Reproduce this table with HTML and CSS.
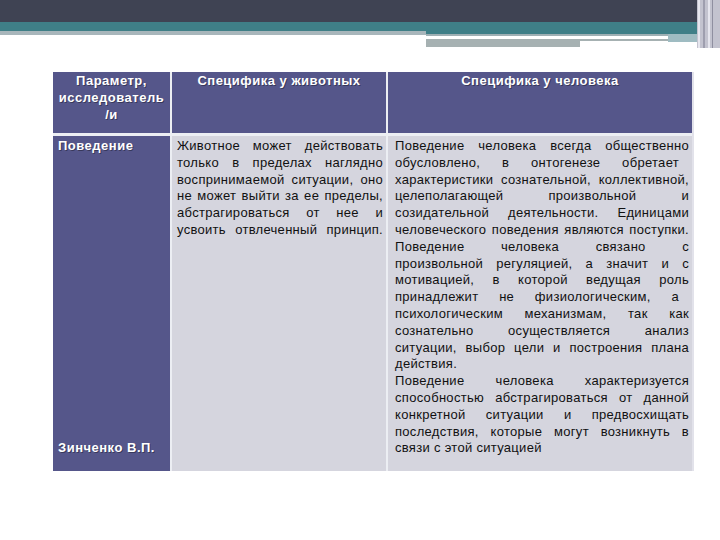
FILE: index.html
```html
<!DOCTYPE html>
<html lang="ru">
<head>
<meta charset="utf-8">
<link rel="stylesheet" href="styles.css">
</head>
<body>
<svg class="deco" width="720" height="50" viewBox="0 0 720 50">
  <rect x="0" y="0" width="720" height="23" fill="#3f4353"/>
  <rect x="0" y="22" width="697" height="10" fill="#3f7f87"/>
  <rect x="426" y="31" width="271" height="3" fill="#3f7f87"/>
  <rect x="0" y="31" width="426" height="4" fill="#a8b6bb"/>
  <rect x="426" y="34" width="242" height="2" fill="#9fb0b4"/>
  <rect x="426" y="36" width="242" height="3" fill="#ffffff"/>
  <rect x="426" y="39" width="242" height="2" fill="#a6b1b2"/>
  <rect x="426" y="41" width="154" height="6" fill="#a6b1b2"/>
  <rect x="668" y="34" width="29" height="8" fill="#9fbcc2"/>
  <rect x="697" y="0" width="23" height="48" fill="#c3c3cf"/>
  <rect x="698" y="0" width="2" height="48" fill="#e6e6ee"/>
  <rect x="703" y="0" width="2" height="48" fill="#9e9eae"/>
  <rect x="708" y="0" width="2" height="48" fill="#e6e6ee"/>
  <rect x="712" y="0" width="1" height="48" fill="#8f8fa0"/>
</svg>
<div class="grid">
  <div class="hcell">Параметр,<br>исследователь<br>/и</div>
  <div class="hcell">Специфика у животных</div>
  <div class="hcell">Специфика у человека</div>
  <div class="pcell">
    <span>Поведение</span>
    <span>Зинченко В.П.</span>
  </div>
  <div class="cell c2">
    <span class="ln">Животное может действовать</span>
    <span class="ln">только в пределах наглядно</span>
    <span class="ln">воспринимаемой ситуации, оно</span>
    <span class="ln">не может выйти за ее пределы,</span>
    <span class="ln">абстрагироваться от нее и</span>
    <span class="ln">усвоить отвлеченный принцип.</span>
  </div>
  <div class="cell c3">
    <span class="ln">Поведение человека всегда общественно</span>
    <span class="ln short">обусловлено, в онтогенезе обретает</span>
    <span class="ln">характеристики сознательной, коллективной,</span>
    <span class="ln">целеполагающей произвольной и</span>
    <span class="ln">созидательной деятельности. Единицами</span>
    <span class="ln">человеческого поведения являются поступки.</span>
    <span class="ln">Поведение человека связано с</span>
    <span class="ln">произвольной регуляцией, а значит и с</span>
    <span class="ln">мотивацией, в которой ведущая роль</span>
    <span class="ln short">принадлежит не физиологическим, а</span>
    <span class="ln">психологическим механизмам, так как</span>
    <span class="ln">сознательно осуществляется анализ</span>
    <span class="ln">ситуации, выбор цели и построения плана</span>
    <span class="ln end">действия.</span>
    <span class="ln">Поведение человека характеризуется</span>
    <span class="ln">способностью абстрагироваться от данной</span>
    <span class="ln">конкретной ситуации и предвосхищать</span>
    <span class="ln">последствия, которые могут возникнуть в</span>
    <span class="ln end">связи с этой ситуацией</span>
  </div>
</div>
</body>
</html>
```

FILE: styles.css
```css
html, body {
  margin: 0;
  padding: 0;
  background: #ffffff;
}

body {
  width: 720px;
  height: 540px;
  overflow: hidden;
  font-family: "Liberation Sans", Arial, sans-serif;
}

.deco {
  display: block;
}

.grid {
  margin: 22px 0 0 53px;
  width: 639px;
  display: grid;
  grid-template-columns: 117px 214px 304px;
  grid-template-rows: 61px auto;
  column-gap: 2px;
  row-gap: 3px;
  background: #eceef3;
  border-right: 2px solid #e2e2ea;
}

.hcell {
  background: #55568a;
  color: #ffffff;
  font-weight: bold;
  font-size: 13px;
  letter-spacing: 0.5px;
  line-height: 17px;
  text-align: center;
  padding: 0 2px;
  text-shadow: 1px 1px 0 rgba(0, 0, 0, 0.35);
}

.pcell {
  background: #55568a;
  color: #ffffff;
  font-weight: bold;
  font-size: 13px;
  letter-spacing: 0.5px;
  line-height: 16.8px;
  padding: 2px 4px 14px 5px;
  display: flex;
  flex-direction: column;
  justify-content: space-between;
  text-shadow: 1px 1px 0 rgba(0, 0, 0, 0.35);
}

.cell {
  background: #d5d5de;
  color: #111111;
  font-size: 13px;
  letter-spacing: 0.3px;
  line-height: 16.8px;
  padding: 2px 3px 14px 5px;
}

.c3 {
  padding-left: 7px;
  padding-right: 3px;
}

.ln {
  display: block;
  white-space: nowrap;
  text-align: justify;
  text-align-last: justify;
}

.ln.short {
  margin-right: 10px;
}

.ln.end {
  text-align-last: left;
}
```
